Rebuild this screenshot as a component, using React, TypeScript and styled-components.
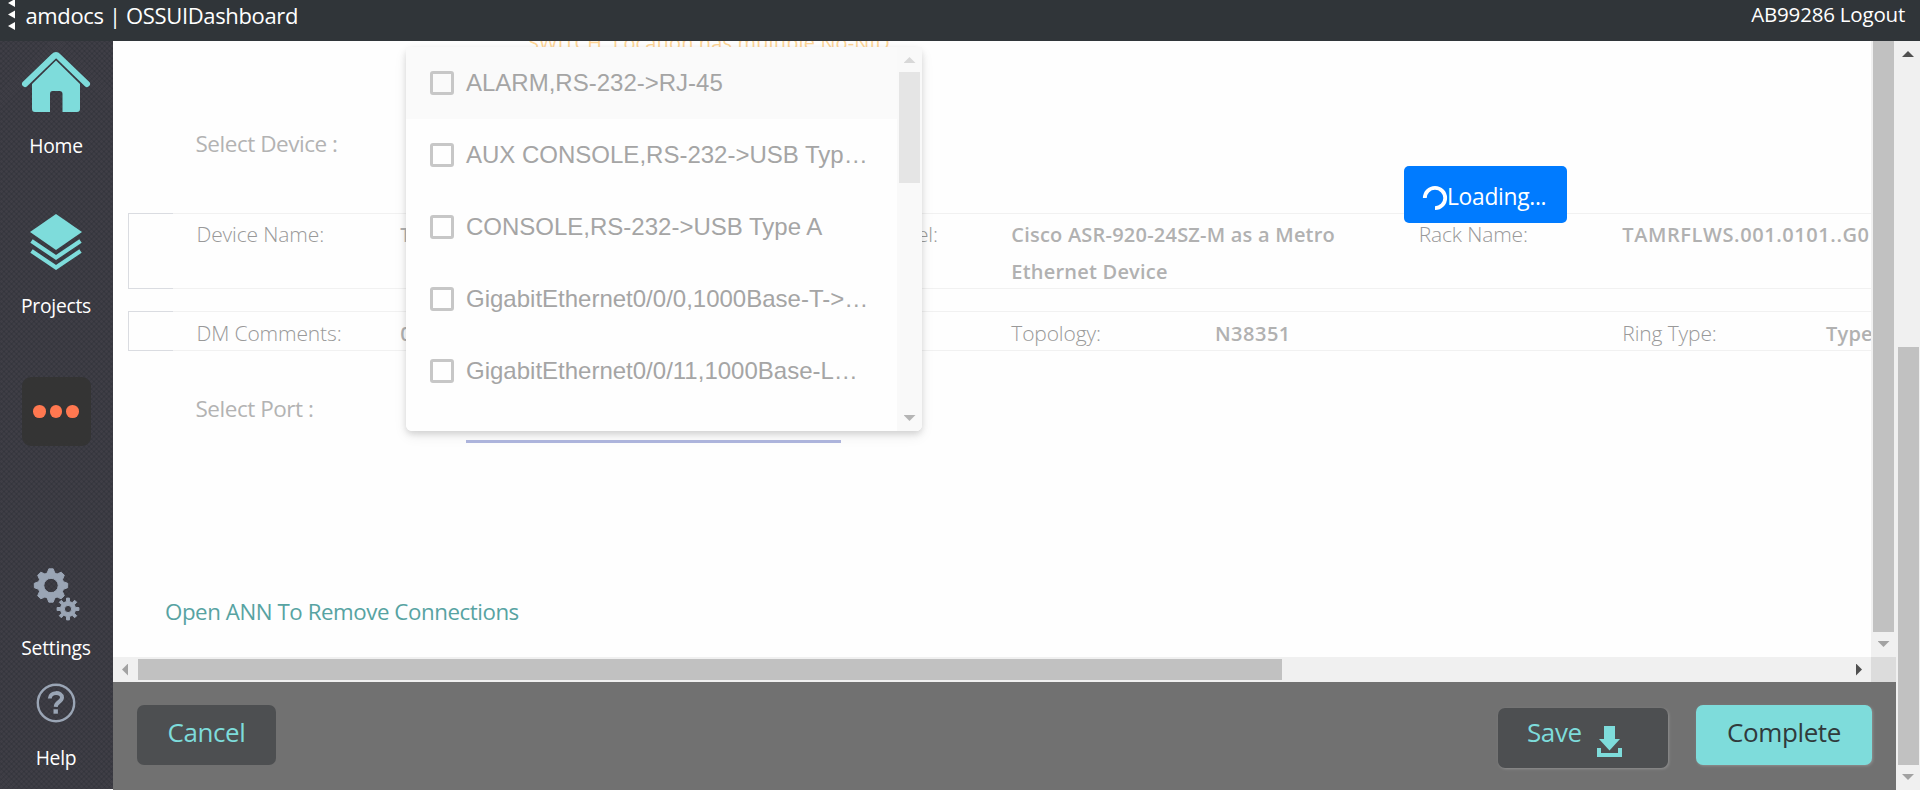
import React from "react";
import styled, { createGlobalStyle, css } from "styled-components";

const GlobalStyle = createGlobalStyle`
  * { box-sizing: border-box; }
  body { margin: 0; background: #fff; overflow: hidden; font-family: "Open Sans", "Noto Sans", sans-serif; }
`;

const AQUA = "#7edcdb";
const STEEL = "#9aa5b5";

const Page = styled.div`
  height: 798px;
  display: flex;
  flex-direction: column;
`;

const TopBar = styled.header`
  height: 41px;
  flex: none;
  display: flex;
  align-items: flex-start;
  background: #303539;
  color: #fff;
  overflow: hidden;
`;

const BrandMark = styled.svg`
  width: 8px;
  height: 30px;
  margin-left: 8px;
  flex: none;
`;

const Brand = styled.div`
  margin-left: 9.5px;
  font-size: 22px;
  line-height: 30px;
  letter-spacing: -0.36px;
  white-space: pre;
`;

const UserLink = styled.div`
  margin: -1px 15px 0 auto;
  font-size: 20.5px;
  line-height: 30px;
  letter-spacing: -0.2px;
`;

const Body = styled.div`
  height: 749px;
  display: flex;
  align-items: flex-start;
`;

const Sidebar = styled.nav`
  width: 113px;
  height: 748px;
  flex: none;
  padding: 10px 1px 0 0;
  display: flex;
  flex-direction: column;
  align-items: center;
  background-color: #3f3e46;
  background-image: repeating-linear-gradient(45deg, rgba(20, 28, 32, 0.13) 0 1.4px, transparent 1.4px 3.54px),
    repeating-linear-gradient(-45deg, rgba(20, 28, 32, 0.13) 0 1.4px, transparent 1.4px 3.54px);
`;

const NavIcon = styled.svg<{ $top?: number }>`
  display: block;
  flex: none;
  margin-top: ${(p) => p.$top ?? 0}px;
`;

const NavLabel = styled.div<{ $top: number }>`
  margin-top: ${(p) => p.$top}px;
  color: #fff;
  font-size: 19.3px;
  line-height: 30px;
  letter-spacing: -0.25px;
`;

const MoreTile = styled.div`
  width: 69px;
  height: 69px;
  margin-top: 56px;
  flex: none;
  display: flex;
  align-items: center;
  justify-content: center;
  gap: 4px;
  border-radius: 9px;
  background: #343434;
`;

const Dot = styled.i`
  width: 12.6px;
  height: 12.6px;
  border-radius: 50%;
  background: #ff7850;
`;

const Main = styled.main`
  width: 1783px;
  height: 749px;
  flex: none;
`;

const Viewport = styled.div`
  display: grid;
  grid-template-columns: 1758px 25px;
  grid-template-rows: 616px 25px;
`;

const Canvas = styled.section`
  position: relative;
  overflow: hidden;
  background: #fefefe;
  display: flex;
  flex-direction: column;
  align-items: flex-start;
`;

const Warning = styled.div`
  height: 30px;
  margin: -13px 0 0 415px;
  font-size: 20px;
  font-weight: 500;
  line-height: 30px;
  letter-spacing: 0.13px;
  color: #ffd596;
  white-space: nowrap;
  flex: none;
`;

const FieldLabel = styled.div<{ $top: number }>`
  height: 30px;
  flex: none;
  margin: ${(p) => p.$top}px 0 0 82.5px;
  font-size: 22.5px;
  line-height: 30px;
  letter-spacing: -0.47px;
  color: #b3b3b3;
`;

const DetailRow = styled.div<{ $top: number; $height: number }>`
  height: ${(p) => p.$height}px;
  width: 1743px;
  margin: ${(p) => p.$top}px 0 0 15px;
  flex: none;
  display: flex;
`;

const RowLead = styled.div`
  width: 45px;
  flex: none;
  border: 1px solid #dadce1;
  border-right: 0;
`;

const RowCells = styled.div<{ $pad: number }>`
  flex: 1;
  min-width: 0;
  display: grid;
  grid-template-columns: repeat(9, 203.7px);
  padding: ${(p) => p.$pad}px 0 0 23.5px;
  border: solid #f1f1f1;
  border-width: 1px 0;
`;

const Cell = styled.div<{ $col: number; $span?: number; $strong?: boolean; $track?: number }>`
  grid-row: 1;
  grid-column: ${(p) => p.$col} / span ${(p) => p.$span ?? 1};
  line-height: 37px;
  height: 37px;
  ${(p) =>
    p.$strong
      ? css`
          font-size: 20px;
          font-weight: 600;
          letter-spacing: ${p.$track ?? 0.22}px;
          color: #b1b1b1;
        `
      : css`
          font-size: 21px;
          font-weight: 300;
          letter-spacing: -0.13px;
          color: #999;
          white-space: nowrap;
        `}
`;

const PortUnderline = styled.div`
  width: 375px;
  height: 3px;
  margin: 16px 0 0 353px;
  flex: none;
  background: #b0b7df;
`;

const AnnLink = styled.a`
  margin: 154px 0 0 52px;
  font-size: 22.3px;
  line-height: 30px;
  letter-spacing: -0.44px;
  color: #57a3a2;
`;

const Menu = styled.div`
  position: absolute;
  left: 293px;
  top: 6px;
  width: 516px;
  height: 384px;
  display: flex;
  overflow: hidden;
  border-radius: 0 0 6px 6px;
  background: #fefefe;
`;

const MenuShadow = styled.div`
  position: absolute;
  left: 293px;
  top: 6px;
  width: 516px;
  height: 384px;
  border-radius: 6px;
  box-shadow: 0 3px 6px rgba(0, 0, 0, 0.13), 0 5px 14px rgba(0, 0, 0, 0.07);
`;

const Options = styled.div`
  flex: 1;
`;

const Option = styled.label<{ $active?: boolean }>`
  height: 72px;
  display: flex;
  align-items: center;
  padding-left: 24px;
  gap: 12px;
  background: ${(p) => (p.$active ? "#fafafa" : "transparent")};
  color: #a5a5a5;
  font: 24px/28px "Liberation Sans", Arial, sans-serif;
  white-space: nowrap;
`;

const Check = styled.span`
  width: 24px;
  height: 24px;
  border: 3px solid #c7c7c7;
  border-radius: 3px;
`;

const MenuScroll = styled.div`
  width: 25px;
  display: flex;
  flex-direction: column;
  align-items: center;
  padding: 10px 0;
  background: #f9f9f9;
`;

const VArrow = styled.i<{ $up?: boolean; $color: string }>`
  width: 12px;
  height: 6px;
  flex: none;
  background: ${(p) => p.$color};
  clip-path: ${(p) => (p.$up ? "polygon(50% 0, 100% 100%, 0 100%)" : "polygon(0 0, 100% 0, 50% 100%)")};
`;

const HArrow = styled.i<{ $left?: boolean; $color: string }>`
  width: 6px;
  height: 12px;
  flex: none;
  background: ${(p) => p.$color};
  clip-path: ${(p) => (p.$left ? "polygon(100% 0, 100% 100%, 0 50%)" : "polygon(0 0, 100% 50%, 0 100%)")};
`;

const Thumb = styled.div<{ $top?: number; $height: number; $color?: string }>`
  width: 21px;
  height: ${(p) => p.$height}px;
  margin-top: ${(p) => p.$top ?? 0}px;
  flex: none;
  background: ${(p) => p.$color ?? "#c1c1c1"};
`;

const Spacer = styled.div`
  flex: 1;
`;

const Gap = styled.div`
  width: 28px;
`;

const Tail = styled.div`
  height: 9px;
  flex: none;
`;

const VTrack = styled.div<{ $top?: number; $bottom: number }>`
  display: flex;
  flex-direction: column;
  align-items: center;
  padding: ${(p) => p.$top ?? 0}px 0 ${(p) => p.$bottom}px;
  background: #f0f0f0;
`;

const PageTrack = styled(VTrack)`
  width: 24px;
  height: 749px;
  flex: none;
`;

const HTrack = styled.div`
  display: flex;
  align-items: center;
  padding: 0 9px;
  background: #f0f0f0;
`;

const HThumb = styled.div`
  width: 1144px;
  height: 21px;
  margin-left: 10px;
  background: #c1c1c1;
`;

const Corner = styled.div`
  background: #dcdcdc;
`;

const Loading = styled.div`
  position: absolute;
  left: 1291px;
  top: 124.5px;
  width: 163px;
  height: 57px;
  display: flex;
  align-items: center;
  padding: 5px 0 0 18px;
  border-radius: 5px;
  background: #007bff;
  color: #fff;
  font-size: 22.8px;
  line-height: 30px;
  letter-spacing: -0.3px;
`;

const Spinner = styled.svg`
  width: 26px;
  height: 26px;
  flex: none;
  margin: 2px -1px 0 0;
`;

const Footer = styled.footer`
  height: 108px;
  display: flex;
  align-items: flex-start;
  padding: 23px 24px 0 24px;
  background: #717171;
`;

const Button = styled.button<{ $width: number; $primary?: boolean; $drop?: number; $pad?: number }>`
  width: ${(p) => p.$width}px;
  height: 60px;
  margin-top: ${(p) => p.$drop ?? 0}px;
  display: flex;
  justify-content: ${(p) => (p.$pad ? "flex-start" : "center")};
  padding: ${(p) => 9 - (p.$drop ?? 0)}px 0 0 ${(p) => p.$pad ?? 0}px;
  border: 0;
  border-radius: 7px;
  background: ${(p) => (p.$primary ? AQUA : "#4d4f51")};
  color: ${(p) => (p.$primary ? "#303a3c" : AQUA)};
  box-shadow: ${(p) => (p.$width > 150 ? "1px 1px 3px rgba(255, 255, 255, 0.22)" : "none")};
  font: 26px/36px "Open Sans", sans-serif;
  letter-spacing: -0.4px;
`;

const DownloadIcon = styled.svg`
  width: 25px;
  height: 31px;
  margin: 12px 0 0 15px;
`;

const gearPath = (cx: number, cy: number, outer: number, inner: number, hole: number, base: number, tip: number) => {
  const point = (radius: number, angle: number) =>
    `${(cx + radius * Math.sin(angle)).toFixed(2)} ${(cy - radius * Math.cos(angle)).toFixed(2)}`;
  const teeth = Array.from({ length: 8 }, (_, i) => {
    const a = (i * Math.PI) / 4;
    return [point(inner, a - base), point(outer, a - tip), point(outer, a + tip), point(inner, a + base)].join("L");
  }).join("L");
  return `M${teeth}ZM${cx - hole} ${cy}a${hole} ${hole} 0 1 0 ${2 * hole} 0a${hole} ${hole} 0 1 0 ${-2 * hole} 0Z`;
};

const HomeIcon = () => (
  <NavIcon width="70" height="62" viewBox="0 0 70 62" fill={AQUA}>
    <path
      d="M4 33L32.500 5.500Q35 3 37.500 5.500L66 33"
      fill="none"
      stroke={AQUA}
      strokeWidth="6"
      strokeLinecap="round"
      strokeLinejoin="round"
    />
    <path d="M35 9.500L59 33V58Q59 61 56 61H41.500V43Q41.500 40 38.500 40H31.500Q29 40 29 43V61H14Q11 61 11 58V33Z" />
  </NavIcon>
);

const LayersIcon = () => (
  <NavIcon $top={52} width="52" height="57" viewBox="0 0 52 57">
    <path d="M26 1L52 19L26 37L0 19Z" fill={AQUA} />
    <path d="M1.500 28L26 44.500L50.500 28M1.500 38L26 54.500L50.500 38" fill="none" stroke={AQUA} strokeWidth="4.200" />
  </NavIcon>
);

const GearsIcon = () => (
  <NavIcon
    $top={121}
    width="48"
    height="54"
    viewBox="0 0 48 54"
    fill={STEEL}
    stroke={STEEL}
    strokeWidth="1"
    strokeLinejoin="round"
    fillRule="evenodd"
  >
    <path d={gearPath(19, 18.5, 16.8, 13, 7.2, 0.3, 0.13)} />
    <path d={gearPath(36, 42, 11, 7.6, 3.6, 0.2, 0.13)} />
  </NavIcon>
);

const HelpIcon = () => (
  <NavIcon $top={20} width="40" height="40" viewBox="0 0 40 40">
    <circle cx="20" cy="20" r="18.200" fill="none" stroke={STEEL} strokeWidth="2.400" />
    <path
      d="M13.800 15.500C14 8.500 26 8.500 26 14.500C26 19 20 18.800 19.700 23.800"
      fill="none"
      stroke={STEEL}
      strokeWidth="4"
    />
    <rect x="17.500" y="26.300" width="4.400" height="4.400" fill={STEEL} />
  </NavIcon>
);

const ports = [
  "ALARM,RS-232->RJ-45",
  "AUX CONSOLE,RS-232->USB Typ…",
  "CONSOLE,RS-232->USB Type A",
  "GigabitEthernet0/0/0,1000Base-T->…",
  "GigabitEthernet0/0/11,1000Base-L…",
];

export default function App() {
  return (
    <Page>
      <GlobalStyle />
      <TopBar>
        <BrandMark viewBox="0 0 8 30" fill="#fff">
          <path d="M0 3L7 -1V7ZM0 14.500L7 10.500V18.500ZM0 26L7 22V30Z" />
        </BrandMark>
        <Brand>amdocs | OSSUIDashboard</Brand>
        <UserLink>AB99286 Logout</UserLink>
      </TopBar>
      <Body>
        <Sidebar>
          <HomeIcon />
          <NavLabel $top={18}>Home</NavLabel>
          <LayersIcon />
          <NavLabel $top={21}>Projects</NavLabel>
          <MoreTile>
            <Dot />
            <Dot />
            <Dot />
          </MoreTile>
          <GearsIcon />
          <NavLabel $top={12}>Settings</NavLabel>
          <HelpIcon />
          <NavLabel $top={20}>Help</NavLabel>
        </Sidebar>
        <Main>
          <Viewport>
            <Canvas>
              <Warning>SWITCH. Location has multiple No-NID</Warning>
              <FieldLabel $top={71}>Select Device :</FieldLabel>
              <DetailRow $top={54} $height={76}>
                <RowLead />
                <RowCells $pad={2}>
                  <Cell $col={1}>Device Name:</Cell>
                  <Cell $col={2} $strong>T</Cell>
                  <Cell $col={4}>Device Model:</Cell>
                  <Cell $col={5} $span={2} $strong>Cisco ASR-920-24SZ-M as a Metro Ethernet Device</Cell>
                  <Cell $col={7}>Rack Name:</Cell>
                  <Cell $col={8} $span={2} $strong $track={0.58}>TAMRFLWS.001.0101..G0</Cell>
                </RowCells>
              </DetailRow>
              <DetailRow $top={22} $height={40}>
                <RowLead />
                <RowCells $pad={3}>
                  <Cell $col={1}>DM Comments:</Cell>
                  <Cell $col={2} $strong>0</Cell>
                  <Cell $col={5}>Topology:</Cell>
                  <Cell $col={6} $strong $track={0.5}>N38351</Cell>
                  <Cell $col={8}>Ring Type:</Cell>
                  <Cell $col={9} $strong>Type</Cell>
                </RowCells>
              </DetailRow>
              <FieldLabel $top={43}>Select Port :</FieldLabel>
              <PortUnderline />
              <AnnLink>Open ANN To Remove Connections</AnnLink>
              <MenuShadow />
              <Menu>
                <Options>
                  {ports.map((name, i) => (
                    <Option key={name} $active={i === 0}>
                      <Check />
                      {name}
                    </Option>
                  ))}
                </Options>
                <MenuScroll>
                  <VArrow $up $color="#d8d8d8" />
                  <Thumb $top={9} $height={111} $color="#e5e5e5" />
                  <Spacer />
                  <VArrow $color="#b5b5b5" />
                </MenuScroll>
              </Menu>
              <Loading>
                <Spinner viewBox="0 0 26 26">
                  <path d="M2.800 13A10.200 10.200 0 1 1 13 23.200" fill="none" stroke="#fff" strokeWidth="3.800" />
                </Spinner>
                Loading...
              </Loading>
            </Canvas>
            <VTrack $bottom={10}>
              <Thumb $height={591} />
              <Spacer />
              <VArrow $color="#a2a2a2" />
            </VTrack>
            <HTrack>
              <HArrow $left $color="#a2a2a2" />
              <HThumb />
              <Spacer />
              <HArrow $color="#505050" />
            </HTrack>
            <Corner />
          </Viewport>
          <Footer>
            <Button $width={139}>Cancel</Button>
            <Spacer />
            <Button $width={170} $drop={3} $pad={29}>
              Save
              <DownloadIcon viewBox="0 0 25 31" fill={AQUA}>
                <path d="M7 0H18V13H23L12.500 24.500L2 13H7ZM0 22H4V27H21V22H25V31H0Z" />
              </DownloadIcon>
            </Button>
            <Gap />
            <Button $width={176} $primary>
              Complete
            </Button>
          </Footer>
        </Main>
        <PageTrack $top={10} $bottom={10}>
          <VArrow $up $color="#505050" />
          <Spacer />
          <Thumb $height={418} />
          <Tail />
          <VArrow $color="#a2a2a2" />
        </PageTrack>
      </Body>
    </Page>
  );
}
